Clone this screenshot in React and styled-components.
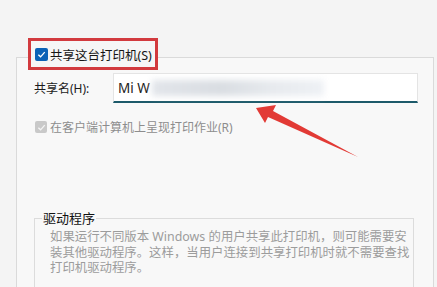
import React from 'react';
import styled, { createGlobalStyle } from 'styled-components';

const GlobalStyle = createGlobalStyle`
  html, body {
    margin: 0;
    padding: 0;
    background: #f4f4f4;
  }
  body {
    font-family: "Noto Sans", "Noto Sans CJK SC", sans-serif;
    color: #1b1b1b;
  }
`;

const Page = styled.div`
  position: relative;
  height: 287px;
  overflow: hidden;
  padding-top: 57px;
  box-sizing: border-box;
`;

const Panel = styled.div`
  margin-left: 16px;
  width: 418px;
  height: 240px;
  box-sizing: border-box;
  border: 1px solid #dadada;
  border-bottom: none;
  background: #f8f8f8;
`;

const LegendRow = styled.div`
  display: flex;
  margin-top: -20px;
  padding-left: 11px;
`;

const Highlight = styled.label`
  display: inline-flex;
  align-items: center;
  gap: 2px;
  height: 32px;
  box-sizing: border-box;
  padding: 0 3px 0 4px;
  border: 3px solid #d23a3e;
  background: #f6f6f6;
  font-size: 12.5px;
  color: #151515;
`;

const Box = styled.span`
  display: inline-flex;
  align-items: center;
  justify-content: center;
  width: ${(p) => (p.$disabled ? 12 : 13)}px;
  height: ${(p) => (p.$disabled ? 12 : 13)}px;
  border-radius: 2px;
  background: ${(p) => (p.$disabled ? '#c9c9c9' : '#0b62b6')};
  flex-shrink: 0;
`;

const NameRow = styled.div`
  display: flex;
  align-items: center;
  margin-top: 3px;
  padding-left: 17px;
  height: 30px;
`;

const FieldLabel = styled.span`
  width: 79px;
  font-size: 12px;
  color: #1b1b1b;
`;

const Input = styled.div`
  display: flex;
  align-items: center;
  width: 305px;
  height: 30px;
  box-sizing: border-box;
  padding-left: 4px;
  background: #ffffff;
  border: 1px solid #e4e4e4;
  border-bottom: 2px solid #1d5a6a;
  font-size: 13.5px;
  color: #222;
`;

const Smudge = styled.span`
  display: inline-block;
  width: 172px;
  height: 16px;
  margin-left: 2px;
  background: linear-gradient(90deg, #e2e5ea, #d9dde2 40%, #e7eaee 70%, #eef1f5);
  filter: blur(3px);
`;

const CheckRow = styled.div`
  display: flex;
  align-items: center;
  gap: 3px;
  margin-top: 16px;
  height: 16px;
  padding-left: 18px;
  font-size: 12px;
  color: #8d8d8d;
`;

const DriverGroup = styled.div`
  margin: 83px 0 0 17px;
  width: 380px;
  height: 80px;
  box-sizing: border-box;
  border: 1px solid #dcdcdc;
  border-bottom: none;
`;

const GroupTitle = styled.div`
  width: fit-content;
  margin: -10px 0 0 7px;
  padding: 0 1px;
  line-height: 18px;
  font-size: 13px;
  color: #111;
  background: #f8f8f8;
`;

const Desc = styled.div`
  margin-top: 2px;
  padding-left: 15px;
  font-size: 12.4px;
  line-height: 15.5px;
  color: #9c9c9c;
  white-space: nowrap;
`;

const Arrow = styled.svg`
  position: absolute;
  left: 0;
  top: 0;
  pointer-events: none;
`;

const Check = ({ color }) => (
  <svg width="9" height="9" viewBox="0 0 10 10">
    <polyline points="1.5,5.2 4,7.6 8.6,2.4" fill="none" stroke={color} strokeWidth="1.5" />
  </svg>
);

export default function App() {
  return (
    <>
      <GlobalStyle />
      <Page>
        <Panel>
          <LegendRow>
            <Highlight>
              <Box>
                <Check color="#ffffff" />
              </Box>
              共享这台打印机(S)
            </Highlight>
          </LegendRow>
          <NameRow>
            <FieldLabel>共享名(H):</FieldLabel>
            <Input>
              Mi W<Smudge />
            </Input>
          </NameRow>
          <CheckRow>
            <Box $disabled>
              <Check color="#f4f4f4" />
            </Box>
            在客户端计算机上呈现打印作业(R)
          </CheckRow>
          <DriverGroup>
            <GroupTitle>驱动程序</GroupTitle>
            <Desc>
              如果运行不同版本 Windows 的用户共享此打印机，则可能需要安
              <br />
              装其他驱动程序。这样，当用户连接到共享打印机时就不需要查找
              <br />
              打印机驱动程序。
            </Desc>
          </DriverGroup>
        </Panel>
        <Arrow width="437" height="287" viewBox="0 0 437 287">
          <polygon
            points="256,108 276,105 273,111 358,157 268,117 265,123"
            fill="#e23a35"
          />
        </Arrow>
      </Page>
    </>
  );
}
